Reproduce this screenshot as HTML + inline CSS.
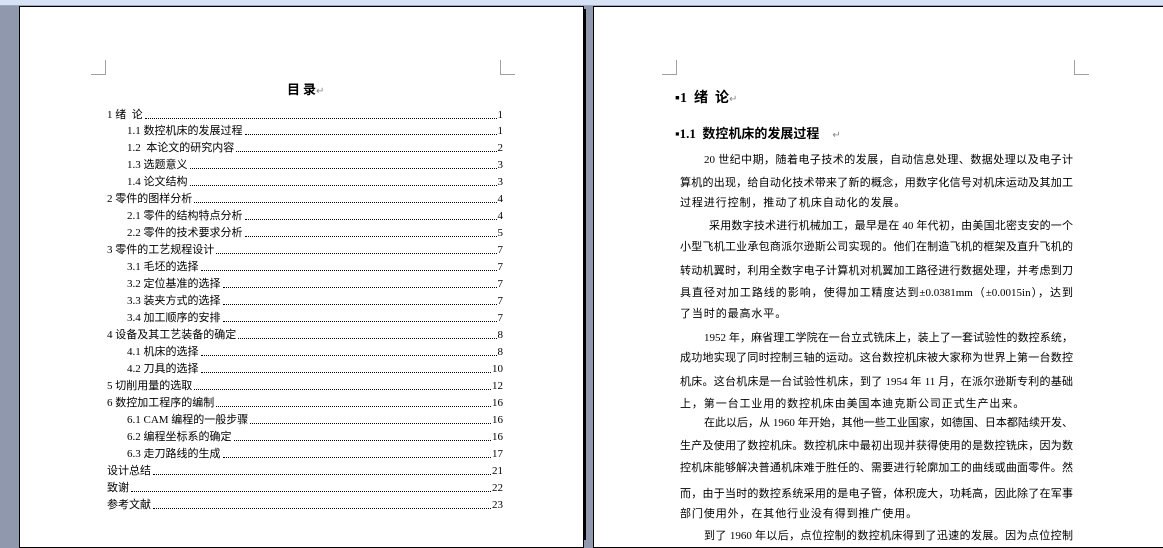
<!DOCTYPE html><html><head><meta charset="utf-8"><style>
*{margin:0;padding:0}
body{width:1163px;height:540px;overflow:hidden;background:#8f98ad;position:relative;font-family:"Liberation Serif","Noto Sans CJK SC",serif;color:#000}
.top{position:absolute;left:0;top:0;width:1163px;height:5px;background:#d7e3f5;border-bottom:1px solid #9aa8c0}
.pg{position:absolute;background:#fff;border:1px solid #000}
.sh{position:absolute;background:#000}
.cr{position:absolute;width:14px;height:14px;border-color:#a0a0a0;border-style:solid;border-width:0}
.t{position:absolute;font-size:11px;white-space:nowrap;line-height:14px}
.row{position:absolute;left:107px;width:396px;height:14px;font-size:11px;line-height:14px;display:flex;align-items:flex-end}
.row.l2{left:127px;width:376px}
.row .d{flex:1;border-bottom:1px dotted #000;margin:0 1px 3px 2px}
.ln{position:absolute;left:680px;width:393px;font-size:11px;line-height:14px;text-align:justify;text-align-last:justify;white-space:nowrap;letter-spacing:0}
</style></head><body>
<div class="top"></div>
<div class="pg" style="left:19px;top:6px;width:563px;height:540px"></div>
<div class="sh" style="left:583px;top:9px;width:3px;height:531px"></div>
<div class="pg" style="left:593px;top:6px;width:580px;height:540px"></div>
<div class="cr" style="left:91px;top:60px;border-right-width:1px;border-bottom-width:1px"></div>
<div class="cr" style="left:500px;top:60px;border-left-width:1px;border-bottom-width:1px"></div>
<div class="cr" style="left:662px;top:60px;border-right-width:1px;border-bottom-width:1px"></div>
<div class="cr" style="left:1074px;top:60px;border-left-width:1px;border-bottom-width:1px"></div>
<div class="t" style="left:287px;top:82px;font-size:13px;font-weight:bold;font-family:'Noto Sans CJK SC',sans-serif">目 录<span style="color:#888;font-weight:normal;font-size:10px">↵</span></div>
<div class="row" style="top:108px"><span>1 绪&nbsp; 论</span><span class="d"></span><span>1</span></div>
<div class="row l2" style="top:124px"><span>1.1 数控机床的发展过程</span><span class="d"></span><span>1</span></div>
<div class="row l2" style="top:141px"><span>1.2&nbsp; 本论文的研究内容</span><span class="d"></span><span>2</span></div>
<div class="row l2" style="top:158px"><span>1.3 选题意义</span><span class="d"></span><span>3</span></div>
<div class="row l2" style="top:175px"><span>1.4 论文结构</span><span class="d"></span><span>3</span></div>
<div class="row" style="top:192px"><span>2 零件的图样分析</span><span class="d"></span><span>4</span></div>
<div class="row l2" style="top:209px"><span>2.1 零件的结构特点分析</span><span class="d"></span><span>4</span></div>
<div class="row l2" style="top:226px"><span>2.2 零件的技术要求分析</span><span class="d"></span><span>5</span></div>
<div class="row" style="top:243px"><span>3 零件的工艺规程设计</span><span class="d"></span><span>7</span></div>
<div class="row l2" style="top:260px"><span>3.1 毛坯的选择</span><span class="d"></span><span>7</span></div>
<div class="row l2" style="top:277px"><span>3.2 定位基准的选择</span><span class="d"></span><span>7</span></div>
<div class="row l2" style="top:294px"><span>3.3 装夹方式的选择</span><span class="d"></span><span>7</span></div>
<div class="row l2" style="top:311px"><span>3.4 加工顺序的安排</span><span class="d"></span><span>7</span></div>
<div class="row" style="top:328px"><span>4 设备及其工艺装备的确定</span><span class="d"></span><span>8</span></div>
<div class="row l2" style="top:345px"><span>4.1 机床的选择</span><span class="d"></span><span>8</span></div>
<div class="row l2" style="top:362px"><span>4.2 刀具的选择</span><span class="d"></span><span>10</span></div>
<div class="row" style="top:379px"><span>5 切削用量的选取</span><span class="d"></span><span>12</span></div>
<div class="row" style="top:396px"><span>6 数控加工程序的编制</span><span class="d"></span><span>16</span></div>
<div class="row l2" style="top:413px"><span>6.1 CAM 编程的一般步骤</span><span class="d"></span><span>16</span></div>
<div class="row l2" style="top:430px"><span>6.2 编程坐标系的确定</span><span class="d"></span><span>16</span></div>
<div class="row l2" style="top:447px"><span>6.3 走刀路线的生成</span><span class="d"></span><span>17</span></div>
<div class="row" style="top:464px"><span>设计总结</span><span class="d"></span><span>21</span></div>
<div class="row" style="top:481px"><span>致谢</span><span class="d"></span><span>22</span></div>
<div class="row" style="top:498px"><span>参考文献</span><span class="d"></span><span>23</span></div>
<div class="t" style="left:675px;top:90px;font-size:14px;font-weight:bold;line-height:18px">▪1&nbsp; 绪&nbsp; 论<span style="color:#888;font-weight:normal;font-size:10px">↵</span></div>
<div class="t" style="left:675px;top:126px;font-size:13px;font-weight:bold;line-height:16px">▪1.1&nbsp; 数控机床的发展过程&nbsp;&nbsp;&nbsp; <span style="color:#888;font-weight:normal;font-size:10px">↵</span></div>
<div class="ln" style="top:153px;left:704px;width:369px">20 世纪中期，随着电子技术的发展，自动信息处理、数据处理以及电子计</div>
<div class="ln" style="top:176px">算机的出现，给自动化技术带来了新的概念，用数字化信号对机床运动及其加工</div>
<div class="ln" style="top:196px;text-align-last:left;letter-spacing:0.9px">过程进行控制，推动了机床自动化的发展。</div>
<div class="ln" style="top:219px;left:709px;width:364px">采用数字技术进行机械加工，最早是在 40 年代初，由美国北密支安的一个</div>
<div class="ln" style="top:240px">小型飞机工业承包商派尔逊斯公司实现的。他们在制造飞机的框架及直升飞机的</div>
<div class="ln" style="top:264px">转动机翼时，利用全数字电子计算机对机翼加工路径进行数据处理，并考虑到刀</div>
<div class="ln" style="top:286px">具直径对加工路线的影响，使得加工精度达到±0.0381mm（±0.0015in），达到</div>
<div class="ln" style="top:307px;text-align-last:left;letter-spacing:0.9px">了当时的最高水平。</div>
<div class="ln" style="top:331px;left:704px;width:369px">1952 年，麻省理工学院在一台立式铣床上，装上了一套试验性的数控系统，</div>
<div class="ln" style="top:351px">成功地实现了同时控制三轴的运动。这台数控机床被大家称为世界上第一台数控</div>
<div class="ln" style="top:375px">机床。这台机床是一台试验性机床，到了 1954 年 11 月，在派尔逊斯专利的基础</div>
<div class="ln" style="top:397px;text-align-last:left;letter-spacing:0.9px">上，第一台工业用的数控机床由美国本迪克斯公司正式生产出来。</div>
<div class="ln" style="top:416px;left:704px;width:369px">在此以后，从 1960 年开始，其他一些工业国家，如德国、日本都陆续开发、</div>
<div class="ln" style="top:439px">生产及使用了数控机床。数控机床中最初出现并获得使用的是数控铣床，因为数</div>
<div class="ln" style="top:461px">控机床能够解决普通机床难于胜任的、需要进行轮廓加工的曲线或曲面零件。然</div>
<div class="ln" style="top:487px">而，由于当时的数控系统采用的是电子管，体积庞大，功耗高，因此除了在军事</div>
<div class="ln" style="top:507px;text-align-last:left;letter-spacing:0.9px">部门使用外，在其他行业没有得到推广使用。</div>
<div class="ln" style="top:529px;left:704px;width:369px">到了 1960 年以后，点位控制的数控机床得到了迅速的发展。因为点位控制</div>
</body></html>
